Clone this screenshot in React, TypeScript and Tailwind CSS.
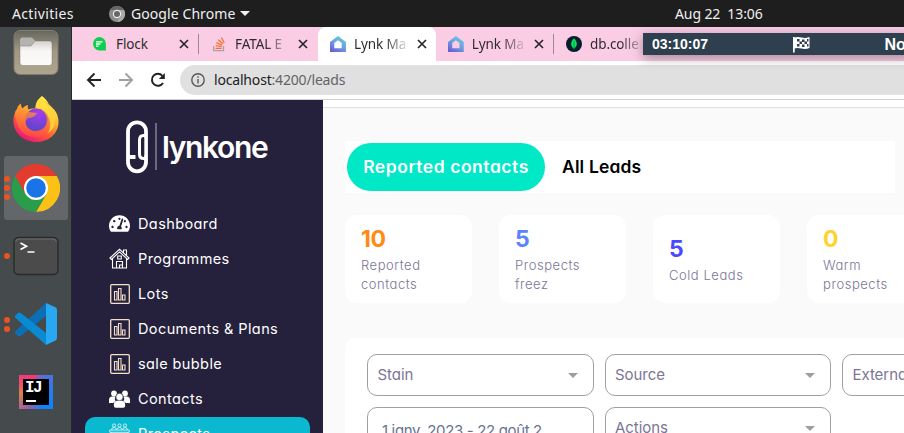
import React from "react";
import { FaTachometerAlt } from "react-icons/fa";

const ui = "font-['Noto_Sans','Open_Sans',sans-serif]";
const pop = "font-['Inter',sans-serif] [font-feature-settings:'cv11','ss03']";

function FolderIcon() {
  return (
    <svg width="46" height="46" viewBox="0 0 46 46">
      <defs>
        <linearGradient id="fb" x1="0" y1="0" x2="0" y2="1">
          <stop offset="0" stopColor="#66665f" />
          <stop offset=".45" stopColor="#a09780" />
          <stop offset="1" stopColor="#aea58e" />
        </linearGradient>
        <linearGradient id="ff" x1="0" y1="0" x2="0" y2="1">
          <stop offset="0" stopColor="#d4d2d0" />
          <stop offset=".4" stopColor="#f7f6f5" />
          <stop offset="1" stopColor="#fbfaf9" />
        </linearGradient>
      </defs>
      <rect x="1" y="1.500" width="44" height="44" rx="6" fill="url(#fb)" stroke="#817b6c" />
      <path d="M7 11q0-2.500 2.500-2.500h8.500q1 0 1.700.8l2.800 3h12v8H7z" fill="#b5b2af" />
      <path d="M7 17h11l4-5h14.500q2.500 0 2.500 2.500v19q0 3-3 3H10q-3 0-3-3z" fill="url(#ff)" stroke="#74705f" strokeWidth=".4" />
    </svg>
  );
}

function FirefoxIcon() {
  return (
    <svg width="48" height="48" viewBox="0 0 48 48">
      <defs>
        <linearGradient id="fx" x1=".8" y1=".1" x2=".3" y2="1">
          <stop offset="0" stopColor="#fff04a" />
          <stop offset=".35" stopColor="#ffb52c" />
          <stop offset=".65" stopColor="#ff5c36" />
          <stop offset="1" stopColor="#e9127a" />
        </linearGradient>
        <radialGradient id="fp" cx=".6" cy=".2" r=".8">
          <stop offset="0" stopColor="#a63cf0" />
          <stop offset="1" stopColor="#5b45c8" />
        </radialGradient>
        <linearGradient id="fo" x1="0" y1="0" x2="0" y2="1">
          <stop offset="0" stopColor="#ffb62f" />
          <stop offset="1" stopColor="#ff4f40" />
        </linearGradient>
      </defs>
      <path d="M30 1c4 3 6 6 7 9 6 4 10 10 9.500 18C46 39 36.500 47 24 47S2 38 1.500 27c-.2-6 1-9 3.500-13 .3-2 1.500-4 4-5.500 0 2 .3 3.500 1.500 5 1.500-2 3.500-3 5.500-3.500-.5 2-.3 3 .5 4.500 3-1.500 5-1 7-1C23 8 26 4 30 1z" fill="url(#fx)" />
      <circle cx="24.500" cy="25" r="11.500" fill="url(#fp)" />
      <path d="M3 17c1-3 3-4 6-3 4-1 7 1 8 3l8 1c-1 3-5 5-9 5-2 2-3 4-2 7 2 5 8 7 14 5 5-2 8-7 6-14-1-3-3-5-5-6 3 0 6 2 8 6 1-7-2-12-7-16 7 2 13 9 13 19-1 11-9 18-19 18C12 42 4 34 3 17z" fill="url(#fo)" opacity=".75" />
      <path d="M23.500 13c1-5 3-9 6.500-12 1 4 4 7 8 10 5 5 7 12 4 20-1 3-3 5-6 7 3-6 3-12 0-17-3-6-7-8-12.500-8z" fill="#ffe03d" opacity=".8" />
    </svg>
  );
}

function ChromeIcon() {
  return (
    <svg width="48" height="48" viewBox="0 0 48 48">
      <path d="M24 12H44.800A24 24 0 0 1 24 48L34.400 30z" fill="#fbc116" />
      <path d="M34.400 30L24 48A24 24 0 0 1 3.200 12L13.600 30z" fill="#2a9d4a" />
      <path d="M24 12H44.800A24 24 0 0 0 3.200 12L13.600 30z" fill="#e33b2e" />
      <circle cx="24" cy="24" r="12" fill="#fff" />
      <circle cx="24" cy="24" r="9.800" fill="#1b73e8" />
    </svg>
  );
}

function TerminalIcon() {
  return (
    <svg width="48" height="40" viewBox="0 0 48 40">
      <rect x="2" y="1.500" width="44" height="37" rx="4.500" fill="#4b4b4b" stroke="#2a2a2a" strokeWidth="1.400" />
      <path d="M3.500 6q.5-3 3.500-3h34q3 0 3.500 3" fill="none" stroke="#777" strokeWidth=".8" />
      <path d="M8.500 7l6 3.200-6 3.200M15.500 16h7" fill="none" stroke="#fff" strokeWidth="1.700" />
    </svg>
  );
}

function CodeIcon() {
  return (
    <svg width="44" height="44" viewBox="0 0 44 44">
      <path d="M32 1L1.500 29c-.8.800-.8 1.800 0 2.500L4 34c.8.700 1.800.800 2.700 0L32 14z" fill="#0b6fb5" />
      <path d="M32 43L1.500 16c-.8-.8-.8-1.800 0-2.500L4 11c.8-.7 1.800-.8 2.700 0L32 31z" fill="#0b8ad4" />
      <path d="M32 1l9.500 4.300q1.500.8 1.500 2.500V36q0 1.700-1.500 2.500L32 43z" fill="#28a7f2" />
    </svg>
  );
}

function IdeaIcon() {
  return (
    <div className="h-[34px] w-[34px] bg-[conic-gradient(from_20deg,#5a6fd8,#1582f5_25%,#0a84ff_38%,#9b5fa8_52%,#dd8046_68%,#f23c78_82%,#fc3575_92%,#5a6fd8)] p-[4px]">
      <div className="flex h-[26px] w-[26px] flex-col bg-black pl-[2px] pt-[3px]">
        <span className="font-['Liberation_Mono',monospace] text-[16px] font-bold leading-[13px] tracking-[-1.500px] text-white">IJ</span>
        <span className="ml-[1px] mt-[5px] h-[2px] w-[10px] bg-white" />
      </div>
    </div>
  );
}

function Dots({ n }: { n: number }) {
  return (
    <div className="flex h-full w-[6px] shrink-0 flex-col justify-center gap-[3px]">
      {Array.from({ length: n }, (_, i) => (
        <span key={i} className="h-[6px] w-[6px] rounded-full bg-[#e95420]" />
      ))}
    </div>
  );
}

function Dock() {
  return (
    <aside className="flex w-[72px] shrink-0 flex-col border-r border-[#26282c] bg-[#454a4d] pl-1">
      {[
        { icon: <FolderIcon />, n: 0, cls: "h-[58px] pb-[8px]" },
        { icon: <FirefoxIcon />, n: 0, cls: "h-[67px] mb-[4px]" },
        { icon: <ChromeIcon />, n: 3, cls: "h-[64px] rounded-[3px] bg-[#63676a]" },
        { icon: <TerminalIcon />, n: 1, cls: "h-[68px] mt-[2px]" },
        { icon: <CodeIcon />, n: 2, cls: "h-[68px]" },
        { icon: <IdeaIcon />, n: 0, cls: "h-[68px]" },
      ].map((d, i) => (
        <div key={i} className={`flex w-[64px] shrink-0 items-center ${d.cls}`}>
          <Dots n={d.n} />
          <div className="flex w-[52px] justify-center">{d.icon}</div>
        </div>
      ))}
    </aside>
  );
}

function FlockIcon() {
  return (
    <svg width="16" height="16" viewBox="0 0 16 16">
      <path d="M7 1a6.800 6.800 0 0 1 6.900 7v6.500H7A6.800 6.800 0 0 1 7 1z" fill="#0bd04d" />
      <path d="M4 5.800h6.500M4 8h4.500M4 10.200h2.500" stroke="#fff" strokeWidth="1.300" />
    </svg>
  );
}

function StackIcon() {
  return (
    <svg width="16" height="16" viewBox="0 0 16 16" fill="none">
      <path d="M2.700 10v4.600h9.800V10" stroke="#a8a0a6" strokeWidth="1.300" />
      <path d="M4.500 12.400h6.200M4.700 9.700l6.100 1M5.400 6.700l5.800 2.500M7.300 3.800l4.700 4M10.300 1.500l3 5.200" stroke="#f4712a" strokeWidth="1.300" />
    </svg>
  );
}

function LynkIcon({ id }: { id: string }) {
  return (
    <svg width="16" height="16" viewBox="0 0 16 16">
      <defs>
        <linearGradient id={id} x1=".8" y1="0" x2=".2" y2="1">
          <stop offset="0" stopColor="#63cfe0" />
          <stop offset=".5" stopColor="#6f9fe0" />
          <stop offset="1" stopColor="#6a5fd6" />
        </linearGradient>
      </defs>
      <path fillRule="evenodd" d="M8 0l8 6v10H0V6zM8 4.200L4.300 7v5.200h7.400V7z" fill={`url(#${id})`} />
    </svg>
  );
}

function MongoIcon() {
  return (
    <svg width="16" height="16" viewBox="0 0 16 16">
      <circle cx="8" cy="8" r="8" fill="#071d2d" />
      <path d="M8 2.200c4 4 3.500 8 0 10.500-3.500-2.500-4-6.500 0-10.500z" fill="#08e45e" />
      <path d="M8 5v8.500" stroke="#0a8a43" strokeWidth=".8" />
    </svg>
  );
}

function Cross() {
  return (
    <svg width="10" height="10" viewBox="0 0 10 10" className="shrink-0">
      <path d="M1 1l8 8M9 1L1 9" stroke="#2a2528" strokeWidth="1.700" />
    </svg>
  );
}

function Tab({ icon, title, active, bar, fade, cls }: { icon: React.ReactNode; title: string; active?: boolean; bar?: boolean; fade?: boolean; cls: string }) {
  return (
    <div className={`flex h-[34px] shrink-0 items-center pl-[12px] ${cls} ${active ? "rounded-t-[8px] bg-white" : ""}`}>
      {icon}
      <span className={`ml-2 w-[56px] whitespace-nowrap text-[13.500px] tracking-[-0.100px] text-[#302b2f] ${fade ? "[mask-image:linear-gradient(to_right,black_55%,transparent)]" : ""}`}>{title}</span>
      <span className="ml-[7px]"><Cross /></span>
      {bar && <span className="ml-[9px] h-5 w-px bg-[#a08894]" />}
    </div>
  );
}

function TabStrip() {
  return (
    <div className="flex h-[34px] shrink-0 overflow-hidden bg-[#facde4] pl-[8px]">
      <Tab icon={<FlockIcon />} title="Flock" bar cls="w-[119px]" />
      <Tab icon={<StackIcon />} title="FATAL E" fade cls="w-[119px]" />
      <Tab icon={<LynkIcon id="la" />} title="Lynk Ma" active fade cls="w-[118px]" />
      <Tab icon={<LynkIcon id="lb" />} title="Lynk Ma" fade bar cls="w-[118px]" />
      <Tab icon={<MongoIcon />} title="db.colle" fade cls="w-[118px]" />
    </div>
  );
}

function Toolbar() {
  return (
    <div className="flex h-[39px] shrink-0 items-center border-b border-[#cfcfcf] bg-white pl-[14px]">
      <svg width="82" height="16" viewBox="0 0 82 16" fill="none" strokeWidth="1.900">
        <path d="M15 8H2M8.500 1.500L2 8l6.500 6.500" stroke="#202124" />
        <path d="M33 8h13M39.500 1.500L46 8l-6.500 6.500" stroke="#a0a0a0" />
        <path d="M77 11a6 6 0 1 1-.6-7.200" stroke="#202124" />
        <path d="M78.800 1v6H72.800z" fill="#202124" />
      </svg>
      <div className="ml-3 flex h-[30px] flex-1 items-center rounded-l-full bg-[#e0e0e0] pl-[11px]">
        <svg width="14" height="14" viewBox="0 0 14 14" fill="none" stroke="#55585c" strokeWidth="1.400">
          <circle cx="7" cy="7" r="6.200" />
          <path d="M7 6v4.500M7 3.300v1.500" />
        </svg>
        <span className="ml-[9px] mt-[-1px] text-[14px] tracking-[-0.180px] text-[#202124]">
          localhost<span className="text-[#606468]">:4200/leads</span>
        </span>
      </div>
    </div>
  );
}

function ChartIcon() {
  return (
    <svg width="20" height="20" viewBox="0 0 20 20" fill="none" stroke="#f5dfc8" strokeWidth="1.300">
      <rect x=".7" y=".7" width="18.600" height="18.600" rx="1" />
      <path d="M4.500 7.500h2.500v8.500H4.500zM8.500 4.500h2.500v11.500H8.500zM12.500 11h2.500v5h-2.500z" strokeWidth="1.100" />
    </svg>
  );
}

function HouseIcon() {
  return (
    <svg width="21" height="21" viewBox="0 0 21 21" fill="none" stroke="#fff" strokeWidth="1.100">
      <path d="M1 10l9.500-8.700L20 10l-1.300 1.400-8.200-7.500-8.200 7.500zM3.500 10.800V20h14v-9.200M14.500 4.600V2h3v5.500M7.500 20v-6.500h6V20M10.500 20v-3h3M8.700 8h3.600v3H8.700z" />
    </svg>
  );
}

function PeopleIcon() {
  return (
    <svg width="21" height="18" viewBox="0 0 21 18" fill="#fff" className="shrink-0">
      <circle cx="5" cy="3.500" r="2.900" />
      <circle cx="16" cy="3.500" r="2.900" />
      <path d="M0 12.500V10q0-3.500 3.200-3.500h3.300Q5 9 6.500 11l-2.300 2H1.500Q0 13.500 0 12.500zM21 12.500V10q0-3.500-3.200-3.500h-3.300Q16 9 14.500 11l2.300 2h2.700q1.500.5 1.500-.5z" />
      <circle cx="10.500" cy="7" r="3.700" stroke="#25213c" strokeWidth=".7" />
      <path d="M4.900 16v-1.500q0-3.700 3.500-3.700h4.200q3.500 0 3.500 3.700V16q0 1.700-1.800 1.700H6.700Q4.900 17.700 4.900 16z" />
    </svg>
  );
}

function MeetingIcon() {
  return (
    <svg width="21" height="21" viewBox="0 0 21 21" fill="none" stroke="#d8f5f8" strokeWidth=".9">
      <circle cx="5" cy="2.500" r="1.600" /><circle cx="10.500" cy="2.500" r="1.600" /><circle cx="16" cy="2.500" r="1.600" />
      <path d="M2.500 7q0-2.500 2.500-2.500T7.500 7q.4-2.500 3-2.500t3 2.500q.3-2.500 2.500-2.500T18.500 7M.8 7h19.400v2.300H.8zM2.500 9.300V18h16V9.300" />
    </svg>
  );
}

function Logo() {
  return (
    <div className="flex h-[54px] items-center">
      <svg width="36" height="54" viewBox="0 0 36 54" fill="none" stroke="#fff">
        <rect x="2" y="2.300" width="18" height="49" rx="9" strokeWidth="3.800" />
        <path d="M20 15.500h-2.500q-4 0-4 4.500v14q0 4.500 4 4.500H20" strokeWidth="3" />
        <path d="M17.500 18v17" stroke="#25213c" strokeWidth="1.500" />
        <path d="M2 37h7.500" strokeWidth="4" />
        <path d="M30 3v47" stroke="#75728a" strokeWidth="1.800" />
      </svg>
      <span className="text-[30px] font-semibold leading-[40px] tracking-[-1.350px] text-white">lynkone</span>
    </div>
  );
}

function Sidebar() {
  const items = [
    { t: "Dashboard", i: <FaTachometerAlt size={21} />, c: "" },
    { t: "Programmes", i: <HouseIcon />, c: "" },
    { t: "Lots", i: <ChartIcon />, c: "" },
    { t: "Documents & Plans", i: <ChartIcon />, c: "" },
    { t: "sale bubble", i: <ChartIcon />, c: "" },
    { t: "Contacts", i: <PeopleIcon />, c: "" },
    { t: "Prospects", i: <MeetingIcon />, c: "rounded-[10px] bg-[#0ab8d0]" },
  ];
  return (
    <nav className={`w-[251px] shrink-0 overflow-hidden bg-[#25213c] px-[13px] pt-[20px] text-white ${pop}`}>
      <div className="pl-[41px]"><Logo /></div>
      <ul className="mt-[33px]">
        {items.map((x) => (
          <li key={x.t} className={`flex h-[35px] w-[225px] items-center pb-[2px] pl-[24px] ${x.c}`}>
            <span className="flex w-[21px] justify-center">{x.i}</span>
            <span className="ml-2 whitespace-nowrap text-[14.500px] tracking-[0.400px]">{x.t}</span>
          </li>
        ))}
      </ul>
    </nav>
  );
}

function Select({ label }: { label: string }) {
  return (
    <div className="flex h-[42px] w-[226.500px] shrink-0 items-center justify-between rounded-[10px] border border-[#a0a0a0] pl-[9.500px] pr-[15px]">
      <span className="text-[15px] tracking-[-0.050px] text-[#7c7596]">{label}</span>
      <span className="h-0 w-0 border-x-[5px] border-t-[5px] border-x-transparent border-t-[#9e9e9e]" />
    </div>
  );
}

function Main() {
  const stats = [
    { n: "10", l: ["Reported", "contacts"], c: "text-[#ff8a14]" },
    { n: "5", l: ["Prospects", "freez"], c: "text-[#5b83ff]" },
    { n: "5", l: ["Cold Leads"], c: "text-[#4b48ff]" },
    { n: "0", l: ["Warm", "prospects"], c: "text-[#ffd22e]" },
  ];
  return (
    <main className={`flex min-w-0 flex-1 flex-col overflow-hidden bg-[#fafafa] ${pop}`}>
      <div className="h-2 shrink-0 border-b border-[#dedee4] bg-white" />
      <div className="ml-[22px] mt-[33px] flex h-[52px] w-[550px] shrink-0 items-center bg-white pl-[2px] text-[17.500px] font-semibold">
        <div className="flex h-12 w-[198px] items-center justify-center rounded-full bg-[#00e8c6] pt-px tracking-[0.550px] text-white">Reported contacts</div>
        <div className="ml-[17px] pt-px tracking-[0.150px] text-black">All Leads</div>
      </div>
      <div className="ml-[22px] mt-[22px] flex shrink-0 gap-[27px]">
        {stats.map((s, i) => (
          <div key={i} className="flex h-[88px] w-[127px] shrink-0 flex-col justify-center rounded-[12px] bg-white pl-4 pt-[1px]">
            <div className={`mb-[3px] text-[23px] font-bold leading-[28px] tracking-[-0.500px] ${s.c}`}>{s.n}</div>
            {s.l.map((l) => (
              <div key={l} className="whitespace-nowrap text-[13px] font-light leading-[19px] tracking-[0.550px] text-[#7c7596]">{l}</div>
            ))}
          </div>
        ))}
      </div>
      <div className="ml-[22px] mt-[35px] flex h-[200px] w-[800px] shrink-0 flex-col gap-[11px] rounded-tl-[10px] bg-white pl-[22px] pt-[16px]">
        <div className="flex gap-[11px]">
          <Select label="Stain" />
          <Select label="Source" />
          <Select label="External" />
        </div>
        <div className="flex gap-[11px]">
          <div className="h-[42px] w-[226.500px] shrink-0 whitespace-nowrap rounded-[10px] border border-[#a0a0a0] pl-[14px] pt-[12px] text-[15px] tracking-[-0.350px] text-[#66738f]">1 janv. 2023 - 22 août 2</div>
          <Select label="Actions" />
        </div>
      </div>
    </main>
  );
}

function Timer() {
  return (
    <div className="absolute left-[643px] top-[33px] flex h-[22px] w-[270px] items-center bg-[#2e3f50] pl-[9px] font-['Liberation_Sans',sans-serif] font-bold text-white shadow-[0_3px_12px_rgba(0,0,0,0.35)]">
      <span className="w-[141px] text-[14px]">03:10:07</span>
      <svg width="17" height="17" viewBox="0 0 17 17">
        <path d="M.8 1v15.500" stroke="#fff" strokeWidth="1.800" />
        <path d="M1 1.500q4-1 7.500 0t8-.5v11q-4 1.500-8 .5T1 12.500z" fill="#fff" />
        <path d="M4 3h2.500v2.500H4zM9 3.500h2.500V6H9zM6.500 5.500H9V8H6.500zM11.500 5.500H14V8h-2.500zM4 8h2.500v2.500H4zM9 8.500h2.500V11H9zM14 3h1.500v2.500H14zM14 8h1.500v2.500H14z" fill="#2e3f50" />
      </svg>
      <span className="ml-[74.500px] mt-[2px] text-[16px]">No</span>
    </div>
  );
}

export default function App() {
  return (
    <div className={`relative flex h-[433px] w-[904px] flex-col overflow-hidden ${ui}`}>
      <header className="flex h-[27px] shrink-0 items-center bg-[#1e1e1e] text-[14px] text-[#f0f0f0]">
        <span className="w-[97px] pl-[12px] tracking-[0.350px]">Activities</span>
        <svg width="16" height="16" viewBox="0 0 16 16" className="ml-3">
          <circle cx="8" cy="8" r="8" fill="#8b8b8b" />
          <path d="M1 4a8 8 0 0 1 14 0H8z" fill="#666" />
          <path d="M12 10l-4 6a8 8 0 0 0 7-12H9z" fill="#aaa" />
          <circle cx="8" cy="8" r="4.200" fill="#eee" />
          <circle cx="8" cy="8" r="3" fill="#666" />
        </svg>
        <span className="ml-[6px] w-[104px] whitespace-nowrap tracking-[0.080px]">Google Chrome</span>
        <span className="ml-[5px] border-x-[5px] border-t-[5px] border-x-transparent border-t-[#f0f0f0]" />
        <span className="ml-[425px] whitespace-pre tracking-[-0.100px]">Aug 22  13:06</span>
      </header>
      <div className="flex min-h-0 flex-1">
        <Dock />
        <div className="flex min-w-0 flex-1 flex-col">
          <TabStrip />
          <Toolbar />
          <div className="flex min-h-0 flex-1">
            <Sidebar />
            <Main />
          </div>
        </div>
      </div>
      <Timer />
    </div>
  );
}
